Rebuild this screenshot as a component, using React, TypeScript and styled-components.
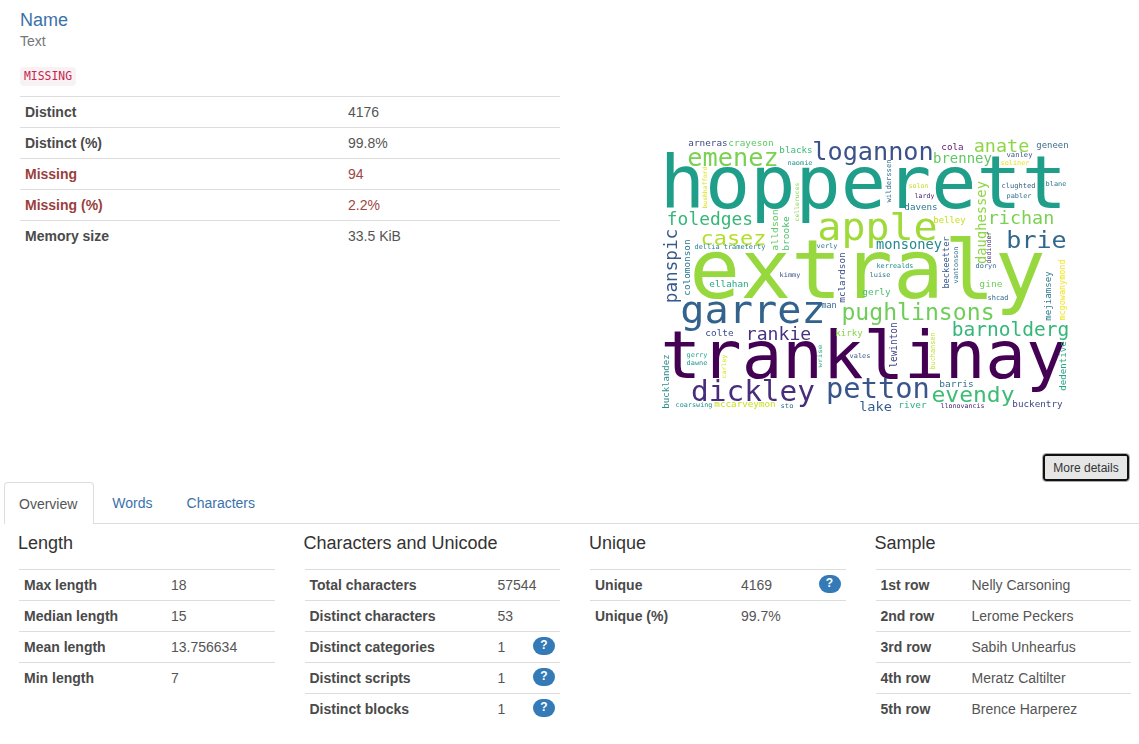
import React from 'react';
import styled, { createGlobalStyle } from 'styled-components';

const GlobalStyle = createGlobalStyle`
    html, body {
        margin: 0;
        padding: 0;
        background: #fff;
    }
    body {
        color: #333;
        font-family: "Liberation Sans", Arial, sans-serif;
        font-size: 14px;
        line-height: 20px;
        overflow: hidden;
    }
`;

const Page = styled.div`
    width: 1139px;
    height: 744px;
`;

const TopSection = styled.div`
    display: flex;
    height: 453px;
`;

const Summary = styled.div`
    width: 540px;
    padding: 10px 0 0 20px;
`;

const VarName = styled.h4`
    margin: 0;
    color: #3a72ab;
    font-size: 18px;
    font-weight: normal;
    line-height: 20px;
`;

const VarType = styled.div`
    margin-top: 1px;
    color: #777;
    font-size: 14px;
    line-height: 20px;
`;

const MissingCode = styled.code`
    display: block;
    width: fit-content;
    margin: 16px 0 10px;
    padding: 2px 4px;
    border-radius: 4px;
    background: #f9f2f4;
    color: #c7254e;
    font-family: "DejaVu Sans Mono", monospace;
    font-size: 11.4px;
    line-height: 15px;
`;

const CloudWrap = styled.div`
    flex: 1;
    padding: 125px 0 0 90px;
`;

const Cloud = styled.svg`
    display: block;
    width: 430px;
    height: 295px;
    filter: blur(0.5px);

    text {
        font-family: "DejaVu Sans Mono", monospace;
    }
`;

const ButtonRow = styled.div`
    display: flex;
    justify-content: flex-end;
    height: 29px;
    padding-right: 9px;
`;

const MoreButton = styled.button`
    width: 88px;
    height: 29px;
    padding: 0;
    border: 1px solid #adadad;
    border-radius: 4px;
    background: #e6e6e6;
    box-shadow: inset 0 0 0 2px #111;
    color: #333;
    font-family: "Liberation Sans", Arial, sans-serif;
    font-size: 12px;
`;

const Tabs = styled.div`
    display: flex;
    height: 41px;
    margin-left: 4px;
    border-bottom: 1px solid #ddd;
`;

const Tab = styled.div<{ $active?: boolean }>`
    height: ${(p) => (p.$active ? '42px' : '41px')};
    box-sizing: border-box;
    margin-right: 3px;
    padding: 11px 16px 0 ${(p) => (p.$active ? '14px' : '15px')};
    border: ${(p) => (p.$active ? '1px solid #ddd' : '0')};
    border-bottom: 0;
    border-radius: 4px 4px 0 0;
    background: #fff;
    color: ${(p) => (p.$active ? '#555' : '#3a72ab')};
`;

const Columns = styled.div`
    display: grid;
    grid-template-columns: repeat(4, 255.5px);
    column-gap: 30px;
    padding: 9px 0 0 19px;
`;

const ColumnTitle = styled.h4`
    margin: 0 0 16px -1px;
    color: #333;
    font-size: 18px;
    font-weight: normal;
    line-height: 20px;
`;

const Row = styled.div<{ $valueX: number; $danger?: boolean }>`
    display: grid;
    grid-template-columns: ${(p) => p.$valueX - 5}px 1fr auto;
    height: 31px;
    box-sizing: border-box;
    padding: 5px;
    border-top: 1px solid #ddd;
    color: ${(p) => (p.$danger ? '#a04644' : '#555')};
`;

const Label = styled.div<{ $danger?: boolean }>`
    color: ${(p) => (p.$danger ? '#9a3f3d' : '#4a4a4a')};
    font-weight: bold;
`;

const Badge = styled.span`
    display: inline-block;
    width: 22px;
    height: 18px;
    border-radius: 9px;
    background: #337ab7;
    color: #fff;
    font-size: 12px;
    font-weight: bold;
    line-height: 16px;
    text-align: center;
`;

type Word = [string, number, number, number, number, string];

// [text, left, baseline, right, font size, colour] - left/right are where the ink starts and ends
const words: Word[] = [
    ['hopperett', 665, 208, 1062, 73, '#1f9e89'],
    ['extraly', 695, 298, 1040, 82, '#97d83f'],
    ['tranklinay', 665, 378, 1062, 65, '#440154'],
    ['garrez', 683, 323, 823, 39, '#33638d'],
    ['pughlinsons', 843, 320, 993, 22.6, '#6ece58'],
    ['barnolderg', 953, 336, 1068, 19, '#35b779'],
    ['rankie', 747, 340, 810, 17.5, '#463480'],
    ['colte', 706, 336, 733, 9, '#3e4a89'],
    ['kirky', 836, 336, 862, 9, '#86d549'],
    ['man', 822, 308, 836, 8, '#31688e'],
    ['ellahan', 710, 287, 748, 9, '#26a884'],
    ['gerly', 863, 295, 890, 9, '#4ac16d'],
    ['gine', 980, 287, 1002, 9, '#6ece58'],
    ['shcad', 988, 300, 1008, 7, '#31688e'],
    ['kimmy', 780, 277, 800, 6.5, '#3b528b'],
    ['luise', 870, 277, 890, 6.5, '#2a788e'],
    ['dickley', 693, 401, 813, 28.5, '#472d7b'],
    ['petton', 828, 398, 928, 27.7, '#39568c'],
    ['evendy', 933, 402, 1013, 22, '#3dbc74'],
    ['barris', 940, 387, 973, 9, '#2d708e'],
    ['lake', 860, 411, 891, 12.5, '#35608d'],
    ['river', 899, 408, 926, 9, '#29af7f'],
    ['buckentry', 1013, 407, 1062, 9, '#3f4889'],
    ['llonovancis', 941, 408, 984, 6.5, '#482173'],
    ['sto', 781, 408, 793, 6.5, '#2c728e'],
    ['mccarveymon', 715, 407, 775, 9, '#c8e020'],
    ['coarswing', 676, 407, 712, 6.5, '#20928c'],
    ['gerry', 687, 357, 707, 6.5, '#22a884'],
    ['dawne', 687, 365, 707, 6.5, '#1f988b'],
    ['vales', 850, 358, 870, 6.5, '#38588c'],
    ['arneras', 689, 146, 727, 9, '#3e4989'],
    ['crayeson', 729, 146, 773, 9, '#5ec962'],
    ['blacks', 780, 153, 812, 9, '#3dbc74'],
    ['logannon', 814, 160, 932, 24.5, '#3b528b'],
    ['emenez', 689, 166, 777, 24, '#7ad151'],
    ['anate', 975, 152, 1028, 17.6, '#8ed645'],
    ['cola', 942, 150, 963, 8.8, '#5a1a6e'],
    ['geneen', 1037, 148, 1068, 8.8, '#3e6f8e'],
    ['brenney', 934, 163, 991, 13.5, '#5ec962'],
    ['vanley', 1007, 157, 1032, 6.8, '#3b528b'],
    ['naomie', 788, 165, 812, 6.5, '#21918c'],
    ['soliner', 1001, 165, 1029, 6.5, '#e5e419'],
    ['solon', 909, 188, 928, 6.5, '#c2df23'],
    ['clughted', 1002, 188, 1035, 7, '#33638d'],
    ['blane', 1046, 186, 1066, 6.6, '#2a788e'],
    ['lardy', 915, 198, 934, 6.5, '#481f70'],
    ['pabler', 1007, 198, 1031, 6.5, '#2c728e'],
    ['davens', 905, 210, 937, 9, '#2a788e'],
    ['foledges', 668, 225, 752, 17, '#35b779'],
    ['apple', 820, 240, 935, 38, '#a0da39'],
    ['belley', 934, 223, 965, 8.8, '#c8e020'],
    ['richan', 989, 224, 1053, 17.5, '#7ad151'],
    ['casez', 702, 245, 765, 20, '#b5de2b'],
    ['brie', 1008, 248, 1065, 23.5, '#31688e'],
    ['monsoney', 877, 249, 941, 13.3, '#23898e'],
    ['dellia trameterty', 695, 249, 765, 6.8, '#26828e'],
    ['verly', 817, 248, 837, 6.5, '#2a788e'],
    ['kerrealds', 877, 268, 913, 6.7, '#218e8d'],
    ['doryn', 976, 268, 996, 6.5, '#306a8e'],
];

// [text, centre x, top, bottom, font size, colour]
const verticalWords: Word[] = [
    ['bucklandez', 666, 355, 408, 9, '#2c8c8d'],
    ['carley', 724, 355, 378, 6, '#dde318'],
    ['wrise', 820, 345, 367, 6, '#29af7f'],
    ['lewinton', 894, 323, 367, 10, '#404788'],
    ['buchansen', 933, 333, 369, 7, '#bddf26'],
    ['dedentive', 1063, 342, 390, 9.5, '#26a884'],
    ['mejiamsey', 1048, 272, 320, 9.5, '#2a788e'],
    ['mcgowanymond', 1063, 260, 320, 8.3, '#f1e51d'],
    ['panspic', 672, 230, 302, 17.3, '#38598c'],
    ['colomonson', 687, 240, 295, 9, '#2a788e'],
    ['mclardson', 842, 253, 302, 9, '#3e4a89'],
    ['beckeetter', 947, 237, 288, 8.5, '#39568c'],
    ['vantonson', 956, 247, 283, 6.6, '#2c728e'],
    ['alldson', 775, 210, 250, 9.5, '#5ec962'],
    ['brooke', 786, 217, 250, 9, '#4ac16d'],
    ['daughessey', 982, 182, 263, 13.5, '#8ed645'],
    ['dedinder', 989, 232, 263, 6.4, '#46327e'],
    ['wilderssen', 889, 160, 202, 7, '#2f6c8e'],
    ['bushhafford', 705, 167, 208, 6, '#d8e219'],
    ['celleruces', 797, 183, 221, 6, '#86d549'],
];

// mono glyphs sit inside their cell, so the advance box is a bit wider than the ink
const BEARING = 0.07;

const WordCloud = () => (
    <Cloud viewBox="650 125 430 295">
        {words.map(([text, x1, y, x2, size, color]) => (
            <text
                key={text}
                x={x1 - size * BEARING}
                y={y}
                fontSize={size}
                fill={color}
                textLength={x2 - x1 + size * BEARING * 2}
                lengthAdjust="spacingAndGlyphs"
            >
                {text}
            </text>
        ))}
        {verticalWords.map(([text, cx, top, bottom, size, color]) => {
            const x = cx + size * 0.28;
            const y = bottom + size * BEARING;
            return (
                <text
                    key={text}
                    x={x}
                    y={y}
                    fontSize={size}
                    fill={color}
                    textLength={bottom - top + size * BEARING * 2}
                    lengthAdjust="spacingAndGlyphs"
                    transform={`rotate(-90 ${x} ${y})`}
                >
                    {text}
                </text>
            );
        })}
    </Cloud>
);

interface StatProps {
    label: string;
    value: string;
    valueX: number;
    help?: boolean;
    danger?: boolean;
}

const Stat = ({ label, value, valueX, help, danger }: StatProps) => (
    <Row $valueX={valueX} $danger={danger}>
        <Label $danger={danger}>{label}</Label>
        <div>{value}</div>
        {help ? <Badge>?</Badge> : null}
    </Row>
);

export default function App() {
    return (
        <Page>
            <GlobalStyle />
            <TopSection>
                <Summary>
                    <VarName>Name</VarName>
                    <VarType>Text</VarType>
                    <MissingCode>MISSING</MissingCode>
                    <Stat label="Distinct" value="4176" valueX={328} />
                    <Stat label="Distinct (%)" value="99.8%" valueX={328} />
                    <Stat label="Missing" value="94" valueX={328} danger />
                    <Stat label="Missing (%)" value="2.2%" valueX={328} danger />
                    <Stat label="Memory size" value="33.5 KiB" valueX={328} />
                </Summary>
                <CloudWrap>
                    <WordCloud />
                </CloudWrap>
            </TopSection>
            <ButtonRow>
                <MoreButton>More details</MoreButton>
            </ButtonRow>
            <Tabs>
                <Tab $active>Overview</Tab>
                <Tab>Words</Tab>
                <Tab>Characters</Tab>
            </Tabs>
            <Columns>
                <div>
                    <ColumnTitle>Length</ColumnTitle>
                    <Stat label="Max length" value="18" valueX={152} />
                    <Stat label="Median length" value="15" valueX={152} />
                    <Stat label="Mean length" value="13.756634" valueX={152} />
                    <Stat label="Min length" value="7" valueX={152} />
                </div>
                <div>
                    <ColumnTitle>Characters and Unicode</ColumnTitle>
                    <Stat label="Total characters" value="57544" valueX={193} />
                    <Stat label="Distinct characters" value="53" valueX={193} />
                    <Stat label="Distinct categories" value="1" valueX={193} help />
                    <Stat label="Distinct scripts" value="1" valueX={193} help />
                    <Stat label="Distinct blocks" value="1" valueX={193} help />
                </div>
                <div>
                    <ColumnTitle>Unique</ColumnTitle>
                    <Stat label="Unique" value="4169" valueX={151} help />
                    <Stat label="Unique (%)" value="99.7%" valueX={151} />
                </div>
                <div>
                    <ColumnTitle>Sample</ColumnTitle>
                    <Stat label="1st row" value="Nelly Carsoning" valueX={96} />
                    <Stat label="2nd row" value="Lerome Peckers" valueX={96} />
                    <Stat label="3rd row" value="Sabih Unhearfus" valueX={96} />
                    <Stat label="4th row" value="Meratz Caltilter" valueX={96} />
                    <Stat label="5th row" value="Brence Harperez" valueX={96} />
                </div>
            </Columns>
        </Page>
    );
}
